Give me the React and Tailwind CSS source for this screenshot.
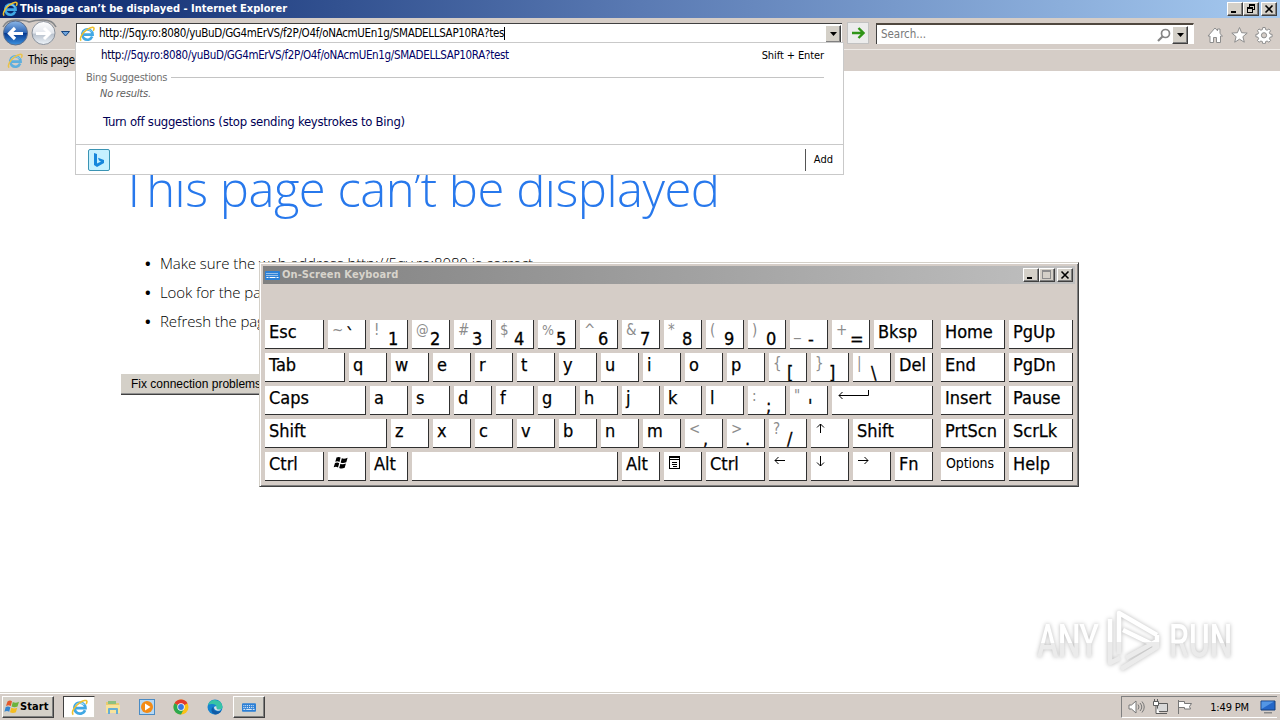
import React from 'react';
import clsx from 'clsx';

const IeIcon = ({ className }) => (
    <svg viewBox="0 0 16 16" className={className} fill="none">
        <path d="M13.2 10.6A5.2 5.2 0 1 1 13.6 8.6H4.6" stroke="#41a8e4" strokeWidth="2.6" />
        <path d="M12.4 5.6A4.8 4.8 0 0 0 4.2 6.4" stroke="#a5e0fa" strokeWidth="1" />
        <path d="M2.2 14.6C-.2 12.8 3.4 6.6 8 3.6C11.4 1.2 14.8 .6 15 2.4C15.1 3.3 14.6 4.2 14.2 4.8" stroke="#efc02c" strokeWidth="1.5" />
    </svg>
);

const KeyboardIcon = ({ className }) => (
    <svg viewBox="0 0 15 9" className={className}>
        <rect width="15" height="9" rx="1" fill="#2c80d6" />
        <path d="M1.5 2.5h12M1.5 4.5h12" stroke="#fff" strokeDasharray="1 1" />
        <path d="M1.5 6.5h2M4.5 6.5h6M11.5 6.5h2" stroke="#fff" />
    </svg>
);

const raised = 'border border-t-white border-l-white border-r-[#404040] border-b-[#404040] shadow-[inset_-1px_-1px_0_#808080] bg-[#d4d0c8]';

const WinButton = ({ className, children }) => (
    <div className={clsx(raised, 'h-[14px] w-4 flex items-center justify-center', className)}>
        <svg viewBox="0 0 12 10" className="w-3 h-[10px]" fill="none" stroke="#000" shapeRendering="crispEdges">
            {children}
        </svg>
    </div>
);

const TitleBar = () => (
    <div className="h-[18px] flex items-center bg-gradient-to-r from-[#0a246a] via-[#5a7ab3] to-[#a6caf0] pl-0.5">
        <IeIcon className="w-4 h-4" />
        <span className="ml-0.5 grow pt-px text-[11px] font-bold text-white tracking-[0.01px] whitespace-nowrap">
            This page can’t be displayed - Internet Explorer
        </span>
        <div className="flex pr-[3px]">
            <WinButton><path d="M2 8h5" strokeWidth="2" /></WinButton>
            <WinButton>
                <path d="M4 1.5h6M4 0.5h6M4.5 1v2M9.5 1v5M8 5.5h2M2 3.5h6M2 4.5h6M2.5 4v5M7.5 4v5M2 8.5h6" />
            </WinButton>
            <WinButton className="ml-0.5"><path d="M2.5 1.5l7 7M9.5 1.5l-7 7" strokeWidth="1.6" shapeRendering="auto" /></WinButton>
        </div>
    </div>
);

const DropArrow = ({ className }) => (
    <div className={clsx(raised, 'flex items-center justify-center', className)}>
        <svg viewBox="0 0 7 4" className="w-[7px] h-1"><path d="M0 0h7L3.5 4z" /></svg>
    </div>
);

const Toolbar = () => (
    <div className="h-[31px] flex items-start">
        <svg viewBox="0 0 76 31" className="w-[76px] h-[31px] shrink-0" fill="none">
            <defs>
                <linearGradient id="back" x1="0" y1="0" x2="0" y2="1">
                    <stop offset="0" stopColor="#8db8e8" />
                    <stop offset=".48" stopColor="#2c64b4" />
                    <stop offset=".52" stopColor="#083a91" />
                    <stop offset="1" stopColor="#3b92e0" />
                </linearGradient>
                <linearGradient id="fwd" x1="0" y1="0" x2="0" y2="1">
                    <stop offset="0" stopColor="#fff" />
                    <stop offset=".5" stopColor="#e2e6ec" />
                    <stop offset=".55" stopColor="#b9c2cd" />
                    <stop offset="1" stopColor="#eef4fa" />
                </linearGradient>
            </defs>
            <path d="M3 9Q6 2 16 2Q25 2 29 4Q35 2 43 2Q53 2 56 9" stroke="#858789" strokeWidth="1.5" />
            <circle cx="15.5" cy="15" r="12" fill="url(#back)" stroke="#5d6f8c" />
            <circle cx="43.5" cy="15" r="11.5" fill="url(#fwd)" stroke="#8b929c" />
            <path d="M23 15.5H10M15 10l-5.5 5.5L15 21" stroke="#fff" strokeWidth="3.2" />
            <path d="M36 15.5H49M44 10l5.5 5.5L44 21" stroke="#fff" strokeWidth="3" />
            <path d="M61.5 13.5h8l-4 4.5z" fill="#6fa5de" stroke="#16447e" />
        </svg>
        <div className="mt-[5px] h-[21px] w-[766px] bg-white border-t border-l border-[#404040] border-b border-b-[#d4d0c8] flex items-center pl-0.5 pr-px shrink-0">
            <IeIcon className="w-4 h-4" />
            <span className="ml-1 pt-px text-[11.5px] tracking-[-0.315px] whitespace-nowrap">
                http://5qy.ro:8080/yuBuD/GG4mErVS/f2P/O4f/oNAcmUEn1g/SMADELLSAP10RA?tes
            </span>
            <span className="w-px h-[13px] bg-black" />
            <DropArrow className="ml-auto w-4 h-[18px]" />
        </div>
        <div className="mt-1 ml-[5px] w-[22px] h-[22px] border border-[#c2c2c2] bg-[#ececec] flex items-center justify-center shrink-0">
            <svg viewBox="0 0 14 12" className="w-[14px] h-3" fill="none" stroke="#2f9417" strokeWidth="2.4">
                <path d="M1 6h11M7.5 1l5 5l-5 5" />
            </svg>
        </div>
        <div className="mt-[5px] ml-[7px] h-[21px] w-[318px] bg-white border-t-2 border-l border-t-[#50483f] border-l-[#404040] border-r border-r-white flex items-center pl-1 pr-[5px] shrink-0">
            <span className="text-[11.5px] text-[#787878] tracking-[-0.05px]">Search...</span>
            <svg viewBox="0 0 14 14" className="ml-auto w-[14px] h-[14px] mr-px" fill="none" stroke="#858585">
                <circle cx="8.5" cy="5.5" r="4" strokeWidth="1.7" />
                <path d="M5.5 8.5L1 13" strokeWidth="2.2" />
            </svg>
            <DropArrow className="w-4 h-[18px]" />
        </div>
        <svg viewBox="0 0 66 18" className="mt-2 ml-[13px] w-[66px] h-[18px] shrink-0" fill="#fff" stroke="#8d8d8d">
            <path d="M1 10L8 2l2.5 2.8V3H13v4.6L15.5 10h-2v6.5h-4v-5h-3v5H3V10z" />
            <path d="M32.5 1.5l2.1 5.2l5.6.4l-4.3 3.6l1.4 5.5l-4.8-3l-4.8 3l1.4-5.5l-4.3-3.6l5.6-.4z" />
            <path d="M55.8 1.500h2.400l.4 2.100l1.500.6l1.800-1.200l1.700 1.700l-1.200 1.800l.6 1.500l2.100.4v2.400l-2.100.4l-.6 1.500l1.200 1.800l-1.700 1.700l-1.800-1.200l-1.500.6l-.4 2.100h-2.400l-.4-2.100l-1.500-.6l-1.800 1.200l-1.700-1.700l1.200-1.800l-.6-1.500l-2.100-.4V8.400l2.100-.4l.6-1.500l-1.200-1.800l1.700-1.700l1.800 1.200l1.500-.6z" />
            <circle cx="57" cy="9.300" r="2.600" fill="#d5cdc7" />
        </svg>
    </div>
);

const TabBar = () => (
    <div className="h-[22px] flex items-center border-t border-t-[#eeeae6] pl-[7px]">
        <IeIcon className="w-4 h-4 opacity-80" />
        <span className="ml-[5px] pt-px text-[11.5px] tracking-[-0.4px]">This page</span>
    </div>
);

const Suggestions = () => (
    <div className="absolute z-10 left-[75px] top-[42px] w-[769px] h-[133px] bg-white border border-[#c9c9c9] flex flex-col">
        <div className="flex justify-between items-center h-6 pl-[25px] pr-[19px] pt-px text-[11.5px] whitespace-nowrap">
            <span className="text-[#00003c] tracking-[-0.33px]">
                http:<span className="text-[#000066]">//5qy.ro:8080/yuBuD/GG4mErVS/f2P/O4f/oNAcmUEn1g/SMADELLSAP10RA?test</span>
            </span>
            <span className="pt-0.5 text-[11px] tracking-[-0.1px]">Shift + Enter</span>
        </div>
        <div className="flex items-center h-[20px] pl-2.5 pr-[19px] text-[11px] text-[#707070] whitespace-nowrap">
            <span className="pt-0.5 tracking-[-0.28px]">Bing Suggestions</span>
            <span className="ml-1 grow h-px bg-[#c4c4c4]" />
        </div>
        <div className="h-3 pl-6 text-[11px] leading-[14px] italic text-[#606060] tracking-[-0.2px]">No results.</div>
        <div className="mt-[14px] pl-[27px] text-[13px] leading-[18px] text-[#000055] tracking-[-0.28px] whitespace-nowrap">
            Turn off suggestions (stop sending keystrokes to Bing)
        </div>
        <div className="mt-auto h-[30px] border-t border-[#c9c9c9] flex items-center pl-3 pr-2.5">
            <div className="w-[22px] h-[22px] rounded-[2px] border border-[#3a94b4] bg-[#c5f0ff] flex items-center justify-center">
                <svg viewBox="0 0 12 16" className="w-3 h-4">
                    <path d="M1 1l3 1v9.5l4-2l-2-1l-1-2.8l6 2.3v3L4 15l-3-2z" fill="#1686dc" />
                </svg>
            </div>
            <div className="ml-auto h-[22px] border-l border-[#555] pl-2 pt-0.5 flex items-center text-[11px]">Add</div>
        </div>
    </div>
);

const ErrorPage = () => (
    <div className="h-[621px] bg-white font-['Open_Sans',sans-serif]">
        <h1 className="pl-[121px] pt-[82px] text-[49px] leading-[70px] font-light text-[#2778ec] tracking-[-0.5px] whitespace-nowrap">
            This page can’t be displayed
        </h1>
        <ul className="mt-[26px] pl-[145px] text-[15px] leading-[29px] font-light text-black whitespace-nowrap tracking-[-0.09px]">
            <li><span className="inline-block w-[15px] font-bold">•</span>Make sure the web address http://5qy.ro:8080 is correct.</li>
            <li><span className="inline-block w-[15px] font-bold">•</span>Look for the page</li>
            <li><span className="inline-block w-[15px] font-bold">•</span>Refresh the page</li>
        </ul>
        <div className="ml-[121px] mt-[38px] w-[150px] h-[21px] pl-2.5 bg-[#d4d0c8] border-b border-b-[#404040] shadow-[inset_0_-1px_0_#909090] flex items-center font-['Liberation_Sans',sans-serif] text-[12px] whitespace-nowrap">
            Fix connection problems
        </div>
    </div>
);

const glyphs = {
    win: (
        <svg viewBox="0 0 16 14" className="w-4 h-[14px] mt-1 ml-px" fill="#000">
            <path d="M3.5 1.5Q6 .3 7.6 1.6L6.5 6Q4.5 4.8 2.3 5.8zM8.8 2.2Q11 3.3 14.6 1.8L13.300 6.200Q10 7.500 7.700 6.400zM2 7Q4.300 5.800 6.200 7.200L5 11.400Q3.200 10.200 .7 11.200zM7.400 7.700Q10 8.800 12.900 7.500L11.700 11.700Q8.800 13 6.200 11.900z" />
        </svg>
    ),
    menu: (
        <svg viewBox="0 0 11 13" className="w-[11px] h-[13px] mt-1 ml-px" fill="none" stroke="#000" shapeRendering="crispEdges">
            <path d="M0 .5h11M0 1.5h11M.5 0v13M10.5 0v13M0 12.5h11M0 3.5h11M3 6.5h5M3 8.5h5M4 10.5h4" />
        </svg>
    ),
    enter: (
        <svg viewBox="0 0 32 9" className="w-8 h-[9px] mt-1 ml-0.5" fill="none" stroke="#000">
            <path d="M30.5 0v5.500H1M4.500 2L1 5.500L4.500 9" />
        </svg>
    ),
    up: <svg viewBox="0 0 9 11" className="w-[9px] h-[11px] mt-1 ml-px" fill="none" stroke="#000"><path d="M4.5 10V1M1 4.5L4.5 1L8 4.500" /></svg>,
    down: <svg viewBox="0 0 9 11" className="w-[9px] h-[11px] mt-1 ml-px" fill="none" stroke="#000"><path d="M4.5 0v10M1 6.5L4.5 10L8 6.500" /></svg>,
    left: <svg viewBox="0 0 11 9" className="w-[11px] h-[9px] mt-1 ml-px" fill="none" stroke="#000"><path d="M11 4.5H1M4.500 1L1 4.500L4.500 8" /></svg>,
    right: <svg viewBox="0 0 11 9" className="w-[11px] h-[9px] mt-1 ml-px" fill="none" stroke="#000"><path d="M0 4.5h10M6.500 1L10 4.500L6.500 8" /></svg>,
};

// [label, width class, shifted label]
const S = 'w-[38px]';
const ctl = 'w-[59px]';
const nav = 'w-16';
const letters = (str) => str.split('').map((c) => [c, S]);
const rows = [
    [['Esc', ctl], ['`', S, '~'], ['1', S, '!'], ['2', S, '@'], ['3', S, '#'], ['4', S, '$'], ['5', S, '%'], ['6', S, '^'], ['7', S, '&'], ['8', S, '*'], ['9', S, '('], ['0', S, ')'], ['-', S, '_'], ['=', S, '+'], ['Bksp', ctl], ['Home', nav], ['PgUp', nav]],
    [['Tab', 'w-20'], ...letters('qwertyuiop'), ['[', S, '{'], [']', S, '}'], ['\\', S, '|'], ['Del', S], ['End', nav], ['PgDn', nav]],
    [['Caps', 'w-[101px]'], ...letters('asdfghjkl'), [';', S, ':'], ["'", S, '"'], ['enter', 'w-[101px]'], ['Insert', nav], ['Pause', nav]],
    [['Shift', 'w-[122px]'], ...letters('zxcvbnm'), [',', S, '<'], ['.', S, '>'], ['/', S, '?'], ['up', S], ['Shift', 'w-20'], ['PrtScn', nav], ['ScrLk', nav]],
    [['Ctrl', ctl], ['win', S], ['Alt', S], ['', 'w-[206px]'], ['Alt', S], ['menu', S], ['Ctrl', ctl], ['left', S], ['down', S], ['right', S], ['Fn', S], ['Options', nav], ['Help', nav]],
];

const mainLeading = (label) => {
    if (label === '`') return 'leading-[30px]';
    return /[0-9=-]/.test(label) ? 'leading-[37px]' : 'leading-[40px]';
};

const Key = ({ label, width, shifted, gap }) => (
    <div className={clsx('h-[29px] bg-white border-r border-b border-[#303030] flex shrink-0 overflow-hidden pl-1 whitespace-nowrap', width, gap && 'ml-1')}>
        {shifted ? (
            <>
                <span className={clsx('w-[14px] shrink-0 text-[#8c8c8c]', /[@%]/.test(shifted) ? 'text-[14px] leading-5' : 'text-[15px] leading-[21px]')}>{shifted}</span>
                <span className={clsx('text-[18px] [-webkit-text-stroke:0.3px_#000]', mainLeading(label))}>{label}</span>
            </>
        ) : glyphs[label] || (
            <span className={label === 'Options' ? 'text-[14px] leading-[22px] tracking-[-0.1px] pl-px' : 'text-[18px] leading-[23px] [-webkit-text-stroke:0.25px_#000]'}>{label}</span>
        )}
    </div>
);

const OnScreenKeyboard = () => (
    <div className="absolute z-10 left-[259px] top-[262px] w-[820px] h-[225px] bg-[#d5cdc7] border border-t-[#d4d0c8] border-l-[#d4d0c8] border-r-[#404040] border-b-[#404040] shadow-[inset_1px_1px_0_#fff,inset_-1px_-1px_0_#808080]">
        <div className="mx-[3px] mt-[3px] h-[18px] flex items-center bg-gradient-to-r from-[#808080] to-[#c0c0c0] pl-0.5 pr-0.5">
            <KeyboardIcon className="w-[15px] h-[9px]" />
            <span className="ml-[2px] grow pt-px text-[11px] font-bold tracking-[0.1px] text-[#d8d4cc]">On-Screen Keyboard</span>
            <WinButton><path d="M2 8h5" strokeWidth="2" /></WinButton>
            <WinButton><path d="M1.5 .5h8v8h-8zM1 1.5h9" stroke="#8c8c8c" /></WinButton>
            <WinButton className="ml-0.5"><path d="M2.5 1.5l7 7M9.5 1.5l-7 7" strokeWidth="1.6" shapeRendering="auto" /></WinButton>
        </div>
        <div className="mt-9 ml-[5px] flex flex-col gap-1">
            {rows.map((row, r) => (
                <div key={r} className="flex gap-1">
                    {row.map(([label, width, shifted], i) => (
                        <Key key={i} label={label} width={width} shifted={shifted} gap={i === row.length - 2} />
                    ))}
                </div>
            ))}
        </div>
    </div>
);

const Watermark = () => (
    <div className="absolute left-[1037px] top-[608px] w-[200px] h-[66px] flex items-center font-['Roboto',sans-serif] font-medium text-[46px] leading-[50px] drop-shadow-[0_0_2px_rgba(0,0,0,0.28)]">
        <span className="w-[66px] flex">
            <span className="origin-left scale-x-[0.7] tracking-[-1px] text-transparent bg-clip-text bg-linear-to-b from-white from-55% to-[#ebebeb] to-55%">ANY</span>
        </span>
        <svg viewBox="0 0 60 66" className="w-[60px] h-[66px] shrink-0" fill="none" stroke="url(#mark)" strokeWidth="4.5" strokeLinejoin="round">
            <defs>
                <linearGradient id="mark" gradientUnits="userSpaceOnUse" x1="0" y1="0" x2="0" y2="66">
                    <stop offset=".52" stopColor="#fff" />
                    <stop offset=".52" stopColor="#ebebeb" />
                </linearGradient>
            </defs>
            <path d="M16 46V5l38 22M20 22l33 16M7 11v44l10-5M23 50l31-17v-6M18 61L54 39v-6" />
        </svg>
        <span className="w-[66px] ml-[6px] flex">
            <span className="origin-left scale-x-[0.69] text-transparent bg-clip-text bg-linear-to-b from-white from-55% to-[#ebebeb] to-55%">RUN</span>
        </span>
    </div>
);

const Taskbar = () => (
    <div className="h-7 border-t border-[#d4d0c8] shadow-[inset_0_1px_0_#fff] bg-[#d5cdc7] flex items-start pt-[3px] pl-0.5 pr-[3px]">
        <div className={clsx(raised, 'w-[52px] h-[22px] flex items-center pl-px')}>
            <svg viewBox="0 0 16 16" className="w-4 h-4 shrink-0">
                <path d="M3.5 2.5Q6 .8 8 2.3L6.8 7Q4.5 5.5 2 7z" fill="#e5592b" />
                <path d="M8.8 3Q11.5 4.500 15 2.800L13.500 7.500Q10.500 9 7.600 7.500z" fill="#6cb33e" />
                <path d="M1.7 8Q4 6.800 6.400 8.200L5.200 12.800Q3 11.300 .4 12.800z" fill="#3585d0" />
                <path d="M7.3 8.700Q10.500 10.200 13.200 8.700L11.900 13.200Q9 14.700 6 13.200z" fill="#f4bd22" />
            </svg>
            <span className="pt-px text-[11px] font-bold tracking-[0.1px]">Start</span>
        </div>
        <div className="ml-[9px] w-8 h-[22px] bg-white border border-t-[#404040] border-l-[#404040] border-[#d4d0c8] flex items-center justify-center">
            <IeIcon className="w-[17px] h-[17px]" />
        </div>
        <svg viewBox="0 0 16 16" className="ml-[10px] mt-[3px] w-4 h-4">
            <path d="M1 3h5l1 1h7v10H1z" fill="#e8ca70" />
            <path d="M3 2h8v3H3z" fill="#8cc080" />
            <path d="M1 6h14v8H1z" fill="#f7e39c" />
            <path d="M3 15V10q0-1 1-1h8q1 0 1 1v5h-2v-4H5v4z" fill="#66aed4" />
        </svg>
        <svg viewBox="0 0 16 16" className="ml-[18px] mt-[3px] w-4 h-4">
            <rect x=".5" y=".5" width="15" height="15" fill="#b6d8f4" stroke="#4a8bc4" />
            <circle cx="8" cy="8" r="6" fill="#f38b16" />
            <path d="M6 4.5v7L11.500 8z" fill="#fff" />
        </svg>
        <svg viewBox="0 0 16 16" className="ml-[18px] mt-[3px] w-4 h-4">
            <circle cx="8" cy="8" r="7.5" fill="#fbc116" />
            <path d="M8 8L1.5 4.250A7.500 7.500 0 0 1 14.500 4.250z" fill="#e33b2e" />
            <path d="M8 8L1.5 4.250A7.500 7.500 0 0 0 8 15.500L11 9.700z" fill="#2da94f" />
            <circle cx="8" cy="8" r="3.7" fill="#fff" />
            <circle cx="8" cy="8" r="2.9" fill="#3979e0" />
        </svg>
        <svg viewBox="0 0 16 16" className="ml-[18px] mt-[3px] w-4 h-4">
            <circle cx="8" cy="8" r="7.5" fill="#1583d0" />
            <path d="M1 6A7.5 7.500 0 0 1 15.500 8Q15.500 10.500 12 10.500Q9.500 10.500 9.500 9Q10 5.500 6 5Q3 4.700 1 6z" fill="#37c4a6" />
            <path d="M6.3 8Q6 12 11 12.500Q13 12.500 14.300 11.700Q12 15.500 8 15.500Q4 14 4.500 10Q5 8.500 6.300 8z" fill="#105ba6" />
            <path d="M9.5 9Q9.500 10.500 12 10.500L14 10.200Q13 12 10.500 11.700Q7 11 7 8.300Q8 7 9.500 7.500z" fill="#d9e4e6" />
        </svg>
        <div className={clsx(raised, 'ml-[10px] w-8 h-[22px] flex items-center justify-center')}>
            <KeyboardIcon className="w-[14px] h-[9px]" />
        </div>
        <div className="ml-auto w-[156px] h-[22px] border-t border-l border-[#808080] border-b border-b-white flex items-center pl-1.5 pr-px">
            <svg viewBox="0 0 66 16" className="w-[66px] h-4" fill="none" stroke="#777">
                <path d="M1 6v4h2.500L8 14V2L3.500 6z" fill="#fff" />
                <path d="M10 5.500q2 2.500 0 5M12 4q3.500 4 0 8M14 2.500q4.500 5.500 0 11" />
                <path d="M29.500 4.500h10v8h-10zM31 14.500h8" fill="#d8d8d8" stroke="#5c5c5c" />
                <path d="M25.500 2.500h5v4h-5zM28 7v7.500h4M26.500 0v2M29.500 0v2" fill="#fff" stroke="#5c5c5c" />
                <path d="M50.500 1v14M50.500 2.500h6v2h7l-2 3l1 2.500h-6v-1.500h-6z" fill="#fff" />
            </svg>
            <span className="ml-auto pt-0.5 text-[11px] tracking-[-0.15px] whitespace-nowrap">1:49 PM</span>
            <svg viewBox="0 0 16 14" className="ml-[11px] w-4 h-[14px]">
                <path d="M1 1h14v9H1z" fill="#2467c8" stroke="#16407c" />
                <path d="M1.500 9L14 1.500H1.500z" fill="#5396e4" />
                <path d="M4 12h8v1.500H4z" fill="#888" />
            </svg>
        </div>
    </div>
);

export default function App() {
    return (
        <div className="relative w-[1280px] h-[720px] overflow-hidden bg-[#d5cdc7] text-black font-['DejaVu_Sans_Condensed','DejaVu_Sans',sans-serif]">
            <TitleBar />
            <Toolbar />
            <TabBar />
            <ErrorPage />
            <Taskbar />
            <Suggestions />
            <OnScreenKeyboard />
            <Watermark />
        </div>
    );
}
